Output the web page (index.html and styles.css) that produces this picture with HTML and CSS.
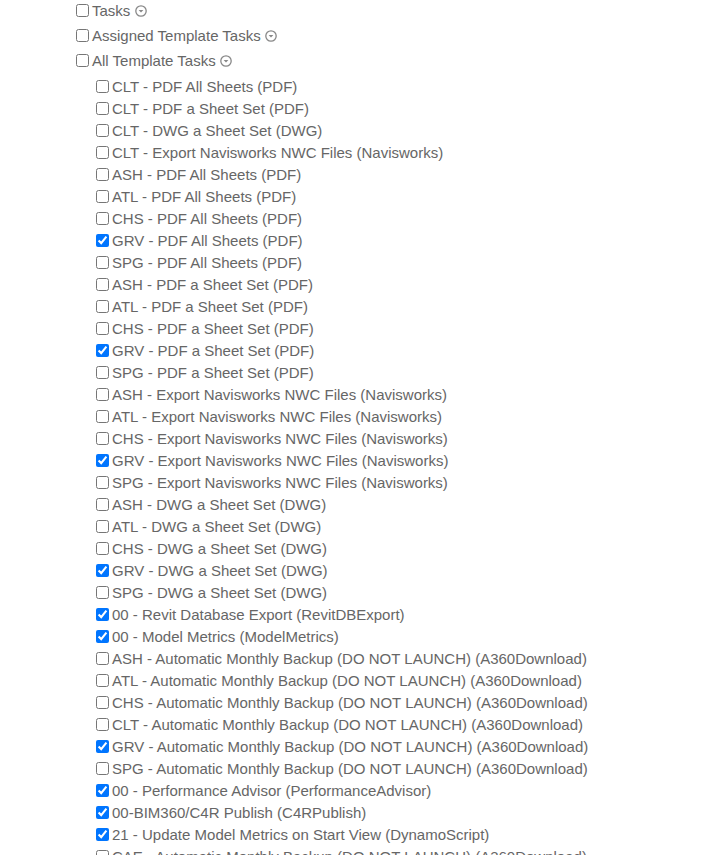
FILE: index.html
```html
<!DOCTYPE html>
<html lang="en">
<head>
    <meta charset="UTF-8">
    <title>Task Picker</title>
    <link rel="stylesheet" href="styles.css">
</head>
<body>

    <ul class="task-tree">
        <li class="task-group">
            <label><input type="checkbox">Tasks</label>
            <span class="toggle"><svg viewBox="0 0 12 12"><circle cx="6" cy="6" r="5.2"/><path d="M3.6 4.9h4.8L6 7.5z"/></svg></span>
        </li>
        <li class="task-group">
            <label><input type="checkbox">Assigned Template Tasks</label>
            <span class="toggle"><svg viewBox="0 0 12 12"><circle cx="6" cy="6" r="5.2"/><path d="M3.6 4.9h4.8L6 7.5z"/></svg></span>
        </li>
        <li class="task-group">
            <label><input type="checkbox">All Template Tasks</label>
            <span class="toggle"><svg viewBox="0 0 12 12"><circle cx="6" cy="6" r="5.2"/><path d="M3.6 4.9h4.8L6 7.5z"/></svg></span>

            <!-- Template task list -->
            <ul class="task-list">
                <li><label><input type="checkbox">CLT - PDF All Sheets (PDF)</label></li>
                <li><label><input type="checkbox">CLT - PDF a Sheet Set (PDF)</label></li>
                <li><label><input type="checkbox">CLT - DWG a Sheet Set (DWG)</label></li>
                <li><label><input type="checkbox">CLT - Export Navisworks NWC Files (Navisworks)</label></li>
                <li><label><input type="checkbox">ASH - PDF All Sheets (PDF)</label></li>
                <li><label><input type="checkbox">ATL - PDF All Sheets (PDF)</label></li>
                <li><label><input type="checkbox">CHS - PDF All Sheets (PDF)</label></li>
                <li><label><input type="checkbox" checked>GRV - PDF All Sheets (PDF)</label></li>
                <li><label><input type="checkbox">SPG - PDF All Sheets (PDF)</label></li>
                <li><label><input type="checkbox">ASH - PDF a Sheet Set (PDF)</label></li>
                <li><label><input type="checkbox">ATL - PDF a Sheet Set (PDF)</label></li>
                <li><label><input type="checkbox">CHS - PDF a Sheet Set (PDF)</label></li>
                <li><label><input type="checkbox" checked>GRV - PDF a Sheet Set (PDF)</label></li>
                <li><label><input type="checkbox">SPG - PDF a Sheet Set (PDF)</label></li>
                <li><label><input type="checkbox">ASH - Export Navisworks NWC Files (Navisworks)</label></li>
                <li><label><input type="checkbox">ATL - Export Navisworks NWC Files (Navisworks)</label></li>
                <li><label><input type="checkbox">CHS - Export Navisworks NWC Files (Navisworks)</label></li>
                <li><label><input type="checkbox" checked>GRV - Export Navisworks NWC Files (Navisworks)</label></li>
                <li><label><input type="checkbox">SPG - Export Navisworks NWC Files (Navisworks)</label></li>
                <li><label><input type="checkbox">ASH - DWG a Sheet Set (DWG)</label></li>
                <li><label><input type="checkbox">ATL - DWG a Sheet Set (DWG)</label></li>
                <li><label><input type="checkbox">CHS - DWG a Sheet Set (DWG)</label></li>
                <li><label><input type="checkbox" checked>GRV - DWG a Sheet Set (DWG)</label></li>
                <li><label><input type="checkbox">SPG - DWG a Sheet Set (DWG)</label></li>
                <li><label><input type="checkbox" checked>00 - Revit Database Export (RevitDBExport)</label></li>
                <li><label><input type="checkbox" checked>00 - Model Metrics (ModelMetrics)</label></li>
                <li><label><input type="checkbox">ASH - Automatic Monthly Backup (DO NOT LAUNCH) (A360Download)</label></li>
                <li><label><input type="checkbox">ATL - Automatic Monthly Backup (DO NOT LAUNCH) (A360Download)</label></li>
                <li><label><input type="checkbox">CHS - Automatic Monthly Backup (DO NOT LAUNCH) (A360Download)</label></li>
                <li><label><input type="checkbox">CLT - Automatic Monthly Backup (DO NOT LAUNCH) (A360Download)</label></li>
                <li><label><input type="checkbox" checked>GRV - Automatic Monthly Backup (DO NOT LAUNCH) (A360Download)</label></li>
                <li><label><input type="checkbox">SPG - Automatic Monthly Backup (DO NOT LAUNCH) (A360Download)</label></li>
                <li><label><input type="checkbox" checked>00 - Performance Advisor (PerformanceAdvisor)</label></li>
                <li><label><input type="checkbox" checked>00-BIM360/C4R Publish (C4RPublish)</label></li>
                <li><label><input type="checkbox" checked>21 - Update Model Metrics on Start View (DynamoScript)</label></li>
                <li><label><input type="checkbox">CAE - Automatic Monthly Backup (DO NOT LAUNCH) (A360Download)</label></li>
            </ul>
        </li>
    </ul>

</body>
</html>
```

FILE: styles.css
```css
/* Basic page setup */
* { box-sizing: border-box; }

body {
    margin: 0;
    font-family: 'Liberation Sans', Arial, sans-serif;
    font-size: 15px;
    color: #666;
    background: #fff;
}

ul {
    list-style: none;
    margin: 0;
    padding: 0;
}

/* Top level groups */
.task-tree {
    padding: 0 0 0 72px;
    margin-top: -2px;
}

.task-group > label,
.task-group > .toggle {
    display: inline-flex;
    align-items: center;
    height: 25px;
    vertical-align: top;
}

label {
    display: inline-flex;
    align-items: center;
    cursor: pointer;
}

input[type="checkbox"] {
    width: 13px;
    height: 13px;
    margin: 0 3px 0 4px;
}

/* Collapse toggle icon */
.toggle {
    margin-left: 0;
    cursor: pointer;
}

.toggle svg {
    width: 12px;
    height: 12px;
}

.toggle circle {
    fill: none;
    stroke: #888;
    stroke-width: 1.3;
}

.toggle path { fill: #888; }

/* Nested list of template tasks */
.task-list {
    padding: 2px 0 0 20px;
}

.task-list li {
    height: 22px;
    display: flex;
    align-items: center;
}
```
